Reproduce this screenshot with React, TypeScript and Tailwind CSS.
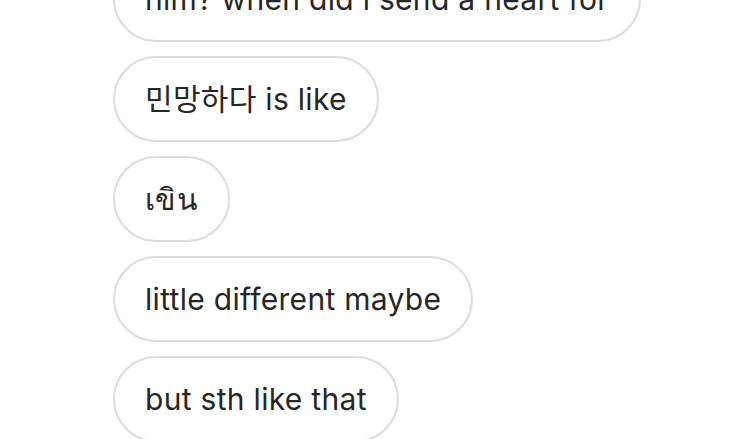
const messages = [
  'him? when did i send a heart for',
  '민망하다 is like',
  'เขิน',
  'little different maybe',
  'but sth like that',
];

export default function App() {
  return (
    <div className="w-[750px] h-[439px] overflow-hidden bg-white">
      <div className="flex flex-col items-start gap-[14px] pl-[113px] -mt-[44px]">
        {messages.map((m) => (
          <div
            key={m}
            className="h-[86px] flex items-center px-[30px] rounded-full border-2 border-[#dcdcdc] text-[#262626] text-[30px] tracking-[0.3px] whitespace-nowrap"
            style={{ fontFamily: 'Inter, "Noto Sans CJK KR", "Noto Sans", sans-serif' }}
          >
            {m}
          </div>
        ))}
      </div>
    </div>
  );
}
